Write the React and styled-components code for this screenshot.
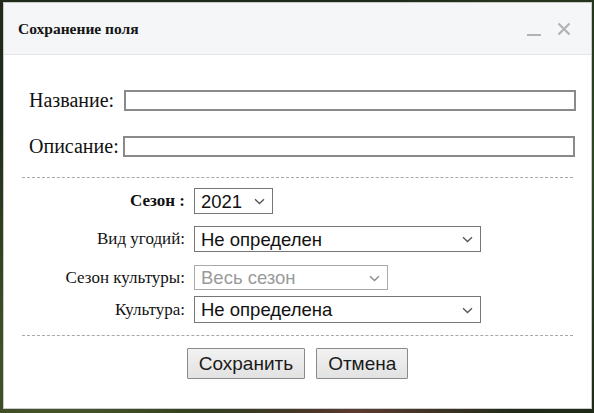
import React from "react";
import styled, { createGlobalStyle } from "styled-components";

const Global = createGlobalStyle`
  html, body { margin: 0; padding: 0; }
  body {
    width: 594px;
    height: 413px;
    overflow: hidden;
    background:
      radial-gradient(circle at 10% 90%, #4a5a2c 0, transparent 40%),
      radial-gradient(circle at 60% 100%, #5a3a30 0, transparent 30%),
      radial-gradient(circle at 95% 40%, #2f4a26 0, transparent 40%),
      #1f2a18;
  }
`;

const Stage = styled.div`
  padding: 2px 2px 4px 3px;
  box-sizing: border-box;
  width: 594px;
  height: 413px;
`;

const Dialog = styled.div`
  width: 589px;
  height: 407px;
  box-sizing: border-box;
  background: #fff;
  border: 1px solid #c9c9c9;
  display: flex;
  flex-direction: column;
`;

const Header = styled.div`
  height: 51px;
  flex: none;
  background: #f5f6f8;
  border-bottom: 1px solid #e3e4e6;
  display: flex;
  align-items: center;
  padding: 0 20px 0 14px;
  box-sizing: content-box;
`;

const Title = styled.div`
  flex: 1;
  font-family: "Liberation Serif", "Times New Roman", serif;
  font-weight: bold;
  font-size: 15.5px;
  color: #141414;
  margin-top: 1px;
`;

const HeaderButtons = styled.div`
  display: flex;
  align-items: center;
  gap: 16px;
`;

const IconBtn = styled.span`
  display: inline-flex;
  width: 14px;
  height: 14px;
  color: #b3b3b3;
`;

const Body = styled.div`
  display: flex;
  flex-direction: column;
  padding: 0 18px 0 18px;
`;

const TextRow = styled.div`
  display: flex;
  align-items: center;
  margin-top: ${(p) => p.$mt}px;
  padding-left: 7px;
`;

const BigLabel = styled.label`
  flex: none;
  font-family: "Liberation Serif", "Times New Roman", serif;
  font-size: 20px;
  color: #111;
  line-height: 21px;
  margin-right: ${(p) => p.$gap}px;
`;

const TextInput = styled.input`
  flex: none;
  width: ${(p) => p.$w}px;
  height: 21px;
  box-sizing: border-box;
  border: 2px solid #8a8a8a;
  background: #fff;
  padding: 0 3px;
  font-family: "Liberation Sans", Arial, sans-serif;
  font-size: 14px;
  outline: none;
`;

const Divider = styled.div`
  border-top: 1px dashed #a8a8a8;
  margin-top: ${(p) => p.$mt}px;
`;

const FormGrid = styled.div`
  display: grid;
  grid-template-columns: 163px auto;
  column-gap: 9px;
  align-items: center;
  justify-content: start;
  margin-top: 10px;
`;

const SmallLabel = styled.label`
  font-family: "Liberation Serif", "Times New Roman", serif;
  font-size: 17px;
  font-weight: ${(p) => (p.$bold ? "bold" : "normal")};
  color: #111;
  text-align: right;
  white-space: nowrap;
  margin-top: ${(p) => p.$mt || 0}px;
`;

const SelectWrap = styled.div`
  position: relative;
  width: ${(p) => p.$w}px;
  height: ${(p) => p.$h}px;
  margin-top: ${(p) => p.$mt || 0}px;
`;

const Select = styled.select`
  appearance: none;
  -webkit-appearance: none;
  width: 100%;
  height: 100%;
  box-sizing: border-box;
  border: 1px solid ${(p) => (p.disabled ? "#a9a9a9" : "#767676")};
  border-radius: 0;
  background: #fff;
  color: ${(p) => (p.disabled ? "#9a9a9a" : "#111")};
  font-family: "Liberation Sans", Arial, sans-serif;
  font-size: 18.5px;
  padding: 0 24px 0 6px;
  outline: none;
  opacity: 1;
`;

const Chevron = styled.svg`
  position: absolute;
  right: 8px;
  top: 50%;
  width: 11px;
  height: 7px;
  margin-top: -3px;
  pointer-events: none;
`;

const Buttons = styled.div`
  display: flex;
  justify-content: center;
  gap: 11px;
  margin-top: 12px;
`;

const Button = styled.button`
  height: 31px;
  padding: 0 11px;
  box-sizing: border-box;
  border: 1px solid #8a8a8a;
  border-radius: 1px;
  background: linear-gradient(#f2f2f2, #e2e2e2);
  font-family: "Liberation Sans", Arial, sans-serif;
  font-size: 19px;
  color: #1a1a1a;
  cursor: pointer;
`;

function Dropdown({ w, h, mt, value, disabled }) {
  return (
    <SelectWrap $w={w} $h={h} $mt={mt}>
      <Select disabled={disabled} defaultValue={value}>
        <option value={value}>{value}</option>
      </Select>
      <Chevron viewBox="0 0 11 7">
        <path
          d="M1 1.2 L5.5 5.5 L10 1.2"
          fill="none"
          stroke={disabled ? "#8a8a8a" : "#555"}
          strokeWidth="1.3"
        />
      </Chevron>
    </SelectWrap>
  );
}

export default function App() {
  return (
    <>
      <Global />
      <Stage>
        <Dialog>
          <Header>
            <Title>Сохранение поля</Title>
            <HeaderButtons>
              <IconBtn>
                <svg viewBox="0 0 14 14" width="14" height="14">
                  <rect x="0" y="12" width="14" height="2" fill="currentColor" />
                </svg>
              </IconBtn>
              <IconBtn>
                <svg viewBox="0 0 14 14" width="14" height="14">
                  <path d="M1.5 1.5 L12.5 12.5 M12.5 1.5 L1.5 12.5" stroke="currentColor" strokeWidth="2.2" />
                </svg>
              </IconBtn>
            </HeaderButtons>
          </Header>
          <Body>
            <TextRow $mt={35}>
              <BigLabel $gap={10}>Название:</BigLabel>
              <TextInput $w={452} />
            </TextRow>
            <TextRow $mt={25}>
              <BigLabel $gap={4}>Описание:</BigLabel>
              <TextInput $w={452} />
            </TextRow>
            <Divider $mt={20} />
            <FormGrid>
              <SmallLabel $bold>Сезон :</SmallLabel>
              <Dropdown w={79} h={26} value="2021" />
              <SmallLabel $mt={12}>Вид угодий:</SmallLabel>
              <Dropdown w={287} h={26} mt={12} value="Не определен" />
              <SmallLabel $mt={13}>Сезон культуры:</SmallLabel>
              <Dropdown w={194} h={25} mt={13} value="Весь сезон" disabled />
              <SmallLabel $mt={6}>Культура:</SmallLabel>
              <Dropdown w={287} h={27} mt={6} value="Не определена" />
            </FormGrid>
            <Divider $mt={12} />
            <Buttons>
              <Button>Сохранить</Button>
              <Button>Отмена</Button>
            </Buttons>
          </Body>
        </Dialog>
      </Stage>
    </>
  );
}
